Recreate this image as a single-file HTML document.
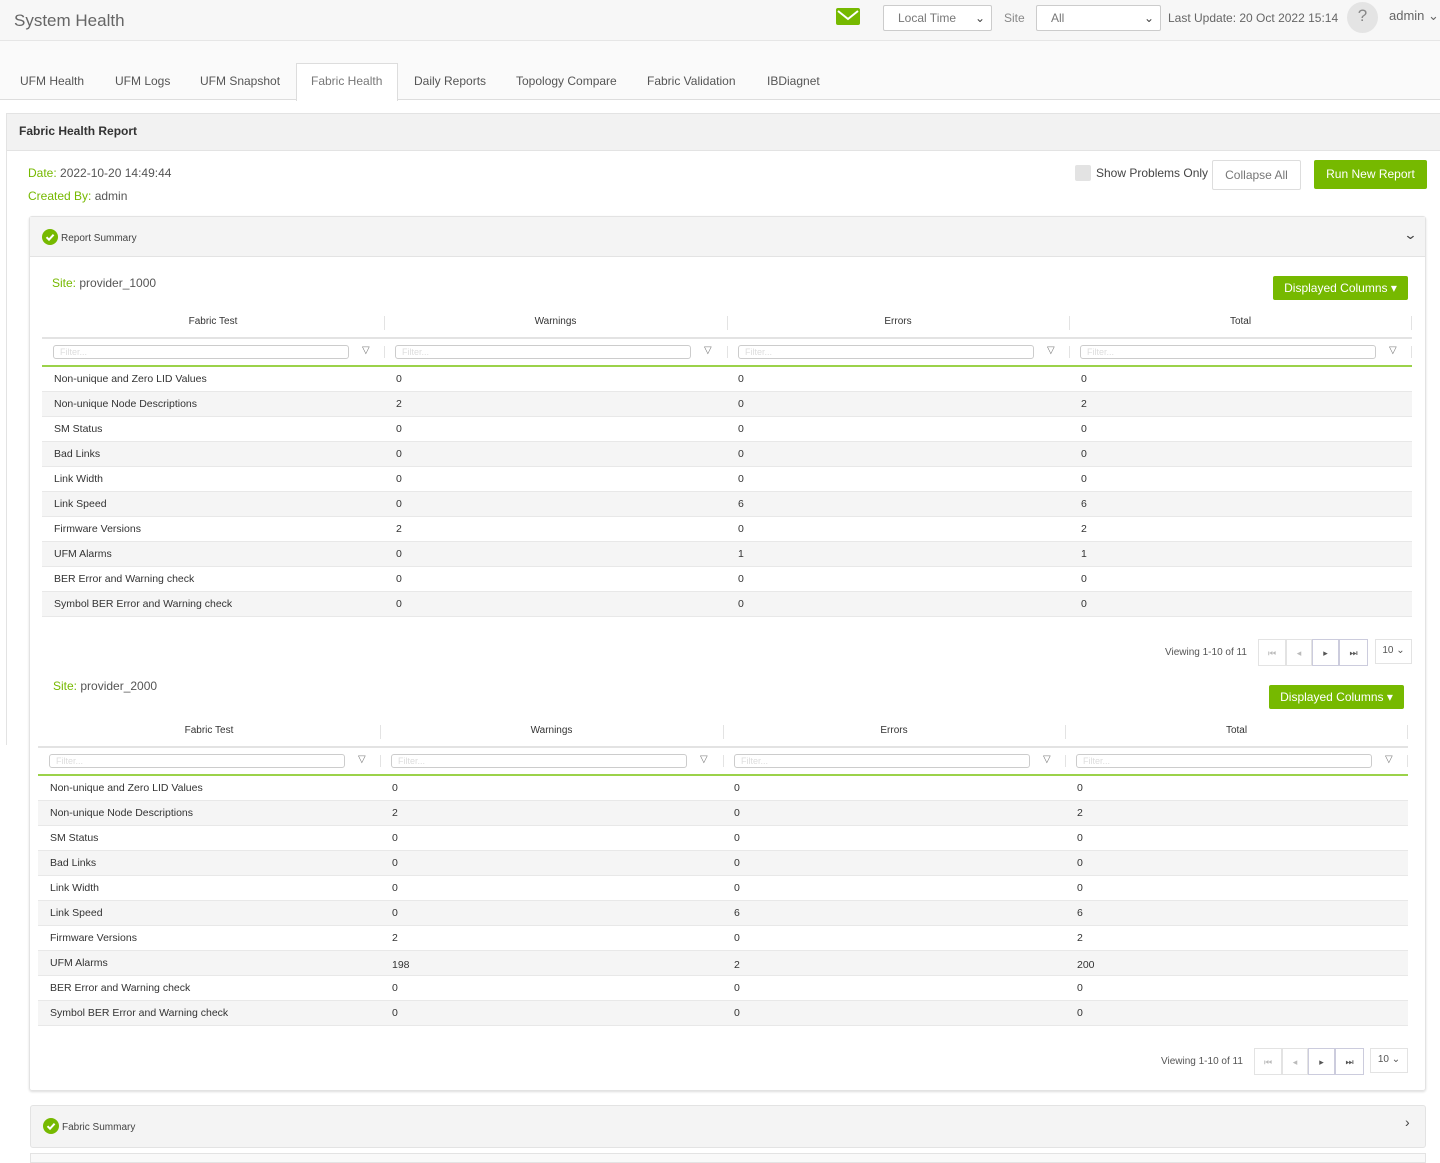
<!DOCTYPE html>
<html><head><meta charset="utf-8"><style>
*{box-sizing:border-box;margin:0;padding:0}
body{width:1440px;height:1159px;overflow:hidden;background:#fff;font-family:"Liberation Sans",sans-serif;color:#333;position:relative;font-size:11px}
.a{position:absolute}
.top{left:0;top:0;width:1440px;height:41px;background:#f7f7f7;border-bottom:1px solid #e6e6e6}
.sel{border:1px solid #ccc;background:#fff;border-radius:2px;height:26px;color:#777;font-size:12px;padding:5px 14px}
.tabs{left:0;top:41px;width:1440px;height:59px;background:#fafafa;border-bottom:1px solid #ddd}
.tab{position:absolute;top:32px;font-size:12px;color:#555}
.g{color:#76b900}
.btn{background:#76b900;color:#fff;border-radius:2px;font-size:12px;text-align:center}
.tbl{position:absolute;width:1370px}
.th{position:absolute;top:0;height:22px;font-size:10px;text-align:center;color:#333;line-height:14px}
.sep{position:absolute;width:1px;background:#e3e3e3}
.fi{position:absolute;height:14px;border:1px solid #ccc;border-radius:3px;font-size:9px;color:#ddd;padding:0 6px;line-height:12px}
.fv{position:absolute;font-size:10px;color:#777}
.row{position:absolute;left:0;width:1370px;height:25px;border-bottom:1px solid #e8e8e8;font-size:10.5px;line-height:24px;color:#333}
.row.s{background:#f5f5f5}
.row span{position:absolute}
.pg{position:absolute;height:27px;border:1px solid #e3e3e3;background:#fff;font-size:9px;text-align:center;line-height:26px;color:#555}
</style></head><body>
<div class="a top"></div>
<div class="a" style="left:14px;top:11px;font-size:17px;color:#666">System Health</div>
<svg class="a" style="left:836px;top:8px" width="24" height="17" viewBox="0 0 24 17"><rect width="24" height="17" rx="2" fill="#76b900"/><path d="M2 3l10 8 10-8" stroke="#fff" stroke-width="2" fill="none"/></svg>
<div class="a sel" style="left:883px;top:5px;width:109px">Local Time<span style="position:absolute;right:6px;color:#444">⌄</span></div>
<div class="a" style="left:1004px;top:11px;font-size:12px;color:#888">Site</div>
<div class="a sel" style="left:1036px;top:5px;width:125px">All<span style="position:absolute;right:6px;color:#444">⌄</span></div>
<div class="a" style="left:1168px;top:11px;font-size:12px;color:#666">Last Update: 20 Oct 2022 15:14</div>
<div class="a" style="left:1347px;top:2px;width:31px;height:31px;border-radius:50%;background:#e4e4e4;color:#888;font-size:17px;text-align:center;line-height:28px">?</div>
<div class="a" style="left:1389px;top:8px;font-size:13px;color:#666">admin ⌄</div>
<div class="a tabs"></div>
<div class="a" style="left:296px;top:63px;width:102px;height:38px;background:#fff;border:1px solid #ddd;border-bottom:none"></div>
<div class="tab" style="left:20px;top:74px">UFM Health</div>
<div class="tab" style="left:115px;top:74px">UFM Logs</div>
<div class="tab" style="left:200px;top:74px">UFM Snapshot</div>
<div class="tab" style="left:311px;top:74px;color:#777">Fabric Health</div>
<div class="tab" style="left:414px;top:74px">Daily Reports</div>
<div class="tab" style="left:516px;top:74px">Topology Compare</div>
<div class="tab" style="left:647px;top:74px">Fabric Validation</div>
<div class="tab" style="left:767px;top:74px">IBDiagnet</div>

<div class="a" style="left:6px;top:113px;width:1440px;height:38px;background:#f2f2f2;border:1px solid #e3e3e3"></div>
<div class="a" style="left:6px;top:151px;width:1px;height:594px;background:#e3e3e3"></div>
<div class="a" style="left:19px;top:124px;font-size:12px;font-weight:bold;color:#333">Fabric Health Report</div>
<div class="a" style="left:28px;top:166px;font-size:12px;color:#555"><span class="g">Date:</span> 2022-10-20 14:49:44</div>
<div class="a" style="left:28px;top:189px;font-size:12px;color:#555"><span class="g">Created By:</span> admin</div>
<div class="a" style="left:1075px;top:165px;width:16px;height:16px;background:#e3e3e3;border-radius:2px"></div>
<div class="a" style="left:1096px;top:166px;font-size:12px;color:#444">Show Problems Only</div>
<div class="a" style="left:1212px;top:160px;width:89px;height:30px;border:1px solid #ddd;border-radius:2px;font-size:12px;color:#777;text-align:center;line-height:28px">Collapse All</div>
<div class="a btn" style="left:1314px;top:160px;width:113px;height:29px;line-height:29px">Run New Report</div>

<div class="a" style="left:29px;top:216px;width:1397px;height:875px;border:1px solid #e3e3e3;border-radius:3px;box-shadow:0 1px 2px #ddd"></div>
<div class="a" style="left:30px;top:217px;width:1395px;height:40px;background:#f4f4f4;border-bottom:1px solid #e3e3e3"></div>
<svg class="a" style="left:42px;top:229px" width="16" height="16" viewBox="0 0 16 16"><circle cx="8" cy="8" r="8" fill="#76b900"/><path d="M4.5 8.2l2.5 2.5 4.6-5" stroke="#fff" stroke-width="2" fill="none"/></svg>
<div class="a" style="left:61px;top:233px;font-size:10px;color:#444">Report Summary</div>
<div class="a" style="left:1405px;top:227px;font-size:13px;color:#444;transform:scaleX(1.3)">⌄</div>

<!-- table 1 -->
<div class="a" style="left:52px;top:276px;font-size:12px;color:#555"><span class="g">Site:</span> provider_1000</div>
<div class="a btn" style="left:1273px;top:276px;width:135px;height:24px;line-height:24px">Displayed Columns ▾</div>
<div class="tbl" style="left:42px;top:315px;height:300px">
<div class="th" style="left:0;width:342px">Fabric Test</div><div class="th" style="left:342px;width:343px">Warnings</div><div class="th" style="left:685px;width:342px">Errors</div><div class="th" style="left:1027px;width:343px">Total</div>
<div class="sep" style="left:342px;top:1px;height:14px"></div><div class="sep" style="left:685px;top:1px;height:14px"></div><div class="sep" style="left:1027px;top:1px;height:14px"></div><div class="sep" style="left:1369px;top:1px;height:14px"></div>
<div class="a" style="left:0;top:22px;width:1370px;height:2px;background:#e3e3e3"></div>
<div class="fi" style="left:11px;top:30px;width:296px">Filter...</div><div class="fv" style="left:320px;top:30px">▽</div>
<div class="fi" style="left:353px;top:30px;width:296px">Filter...</div><div class="fv" style="left:662px;top:30px">▽</div>
<div class="fi" style="left:696px;top:30px;width:296px">Filter...</div><div class="fv" style="left:1005px;top:30px">▽</div>
<div class="fi" style="left:1038px;top:30px;width:296px">Filter...</div><div class="fv" style="left:1347px;top:30px">▽</div>
<div class="sep" style="left:342px;top:31px;height:12px"></div><div class="sep" style="left:685px;top:31px;height:12px"></div><div class="sep" style="left:1027px;top:31px;height:12px"></div><div class="sep" style="left:1369px;top:31px;height:12px"></div>
<div class="a" style="left:0;top:50px;width:1370px;height:2px;background:#9bd24a"></div>
<div class="row" style="top:52px"><span style="left:12px">Non-unique and Zero LID Values</span><span style="left:354px">0</span><span style="left:696px">0</span><span style="left:1039px">0</span></div>
<div class="row s" style="top:77px"><span style="left:12px">Non-unique Node Descriptions</span><span style="left:354px">2</span><span style="left:696px">0</span><span style="left:1039px">2</span></div>
<div class="row" style="top:102px"><span style="left:12px">SM Status</span><span style="left:354px">0</span><span style="left:696px">0</span><span style="left:1039px">0</span></div>
<div class="row s" style="top:127px"><span style="left:12px">Bad Links</span><span style="left:354px">0</span><span style="left:696px">0</span><span style="left:1039px">0</span></div>
<div class="row" style="top:152px"><span style="left:12px">Link Width</span><span style="left:354px">0</span><span style="left:696px">0</span><span style="left:1039px">0</span></div>
<div class="row s" style="top:177px"><span style="left:12px">Link Speed</span><span style="left:354px">0</span><span style="left:696px">6</span><span style="left:1039px">6</span></div>
<div class="row" style="top:202px"><span style="left:12px">Firmware Versions</span><span style="left:354px">2</span><span style="left:696px">0</span><span style="left:1039px">2</span></div>
<div class="row s" style="top:227px"><span style="left:12px">UFM Alarms</span><span style="left:354px">0</span><span style="left:696px">1</span><span style="left:1039px">1</span></div>
<div class="row" style="top:252px"><span style="left:12px">BER Error and Warning check</span><span style="left:354px">0</span><span style="left:696px">0</span><span style="left:1039px">0</span></div>
<div class="row s" style="top:277px"><span style="left:12px">Symbol BER Error and Warning check</span><span style="left:354px">0</span><span style="left:696px">0</span><span style="left:1039px">0</span></div>
</div>
<div class="a" style="left:1165px;top:647px;font-size:10px;color:#555">Viewing 1-10 of 11</div>
<div class="pg" style="left:1258px;top:639px;width:28px;color:#bbb">⏮</div><div class="pg" style="left:1286px;top:639px;width:26px;color:#bbb">◂</div><div class="pg" style="left:1312px;top:639px;width:27px;border-color:#ccd">▸</div><div class="pg" style="left:1339px;top:639px;width:29px;border-color:#ccd">⏭</div>
<div class="pg" style="left:1375px;top:639px;width:37px;height:25px;line-height:22px;font-size:10px">10 ⌄</div>

<!-- table 2 -->
<div class="a" style="left:53px;top:679px;font-size:12px;color:#555"><span class="g">Site:</span> provider_2000</div>
<div class="a btn" style="left:1269px;top:685px;width:135px;height:24px;line-height:24px">Displayed Columns ▾</div>
<div class="tbl" style="left:38px;top:724px;height:300px">
<div class="th" style="left:0;width:342px">Fabric Test</div><div class="th" style="left:342px;width:343px">Warnings</div><div class="th" style="left:685px;width:342px">Errors</div><div class="th" style="left:1027px;width:343px">Total</div>
<div class="sep" style="left:342px;top:1px;height:14px"></div><div class="sep" style="left:685px;top:1px;height:14px"></div><div class="sep" style="left:1027px;top:1px;height:14px"></div><div class="sep" style="left:1369px;top:1px;height:14px"></div>
<div class="a" style="left:0;top:22px;width:1370px;height:2px;background:#e3e3e3"></div>
<div class="fi" style="left:11px;top:30px;width:296px">Filter...</div><div class="fv" style="left:320px;top:30px">▽</div>
<div class="fi" style="left:353px;top:30px;width:296px">Filter...</div><div class="fv" style="left:662px;top:30px">▽</div>
<div class="fi" style="left:696px;top:30px;width:296px">Filter...</div><div class="fv" style="left:1005px;top:30px">▽</div>
<div class="fi" style="left:1038px;top:30px;width:296px">Filter...</div><div class="fv" style="left:1347px;top:30px">▽</div>
<div class="sep" style="left:342px;top:31px;height:12px"></div><div class="sep" style="left:685px;top:31px;height:12px"></div><div class="sep" style="left:1027px;top:31px;height:12px"></div><div class="sep" style="left:1369px;top:31px;height:12px"></div>
<div class="a" style="left:0;top:50px;width:1370px;height:2px;background:#9bd24a"></div>
<div class="row" style="top:52px"><span style="left:12px">Non-unique and Zero LID Values</span><span style="left:354px">0</span><span style="left:696px">0</span><span style="left:1039px">0</span></div>
<div class="row s" style="top:77px"><span style="left:12px">Non-unique Node Descriptions</span><span style="left:354px">2</span><span style="left:696px">0</span><span style="left:1039px">2</span></div>
<div class="row" style="top:102px"><span style="left:12px">SM Status</span><span style="left:354px">0</span><span style="left:696px">0</span><span style="left:1039px">0</span></div>
<div class="row s" style="top:127px"><span style="left:12px">Bad Links</span><span style="left:354px">0</span><span style="left:696px">0</span><span style="left:1039px">0</span></div>
<div class="row" style="top:152px"><span style="left:12px">Link Width</span><span style="left:354px">0</span><span style="left:696px">0</span><span style="left:1039px">0</span></div>
<div class="row s" style="top:177px"><span style="left:12px">Link Speed</span><span style="left:354px">0</span><span style="left:696px">6</span><span style="left:1039px">6</span></div>
<div class="row" style="top:202px"><span style="left:12px">Firmware Versions</span><span style="left:354px">2</span><span style="left:696px">0</span><span style="left:1039px">2</span></div>
<div class="row s" style="top:227px"><span style="left:12px">UFM Alarms</span><span style="left:354px;top:2px">198</span><span style="left:696px;top:2px">2</span><span style="left:1039px;top:2px">200</span></div>
<div class="row" style="top:252px"><span style="left:12px">BER Error and Warning check</span><span style="left:354px">0</span><span style="left:696px">0</span><span style="left:1039px">0</span></div>
<div class="row s" style="top:277px"><span style="left:12px">Symbol BER Error and Warning check</span><span style="left:354px">0</span><span style="left:696px">0</span><span style="left:1039px">0</span></div>
</div>
<div class="a" style="left:1161px;top:1056px;font-size:10px;color:#555">Viewing 1-10 of 11</div>
<div class="pg" style="left:1254px;top:1048px;width:28px;color:#bbb">⏮</div><div class="pg" style="left:1282px;top:1048px;width:26px;color:#bbb">◂</div><div class="pg" style="left:1308px;top:1048px;width:27px;border-color:#ccd">▸</div><div class="pg" style="left:1335px;top:1048px;width:29px;border-color:#ccd">⏭</div>
<div class="pg" style="left:1370px;top:1048px;width:38px;height:25px;line-height:22px;font-size:10px">10 ⌄</div>

<div class="a" style="left:30px;top:1105px;width:1396px;height:43px;background:#f4f4f4;border:1px solid #e3e3e3;border-radius:3px"></div>
<svg class="a" style="left:43px;top:1118px" width="16" height="16" viewBox="0 0 16 16"><circle cx="8" cy="8" r="8" fill="#76b900"/><path d="M4.5 8.2l2.5 2.5 4.6-5" stroke="#fff" stroke-width="2" fill="none"/></svg>
<div class="a" style="left:62px;top:1122px;font-size:10px;color:#444">Fabric Summary</div>
<div class="a" style="left:1405px;top:1114px;font-size:14px;color:#444">›</div>
<div class="a" style="left:30px;top:1153px;width:1396px;height:10px;border:1px solid #e3e3e3;background:#f9f9f9"></div>
</body></html>
